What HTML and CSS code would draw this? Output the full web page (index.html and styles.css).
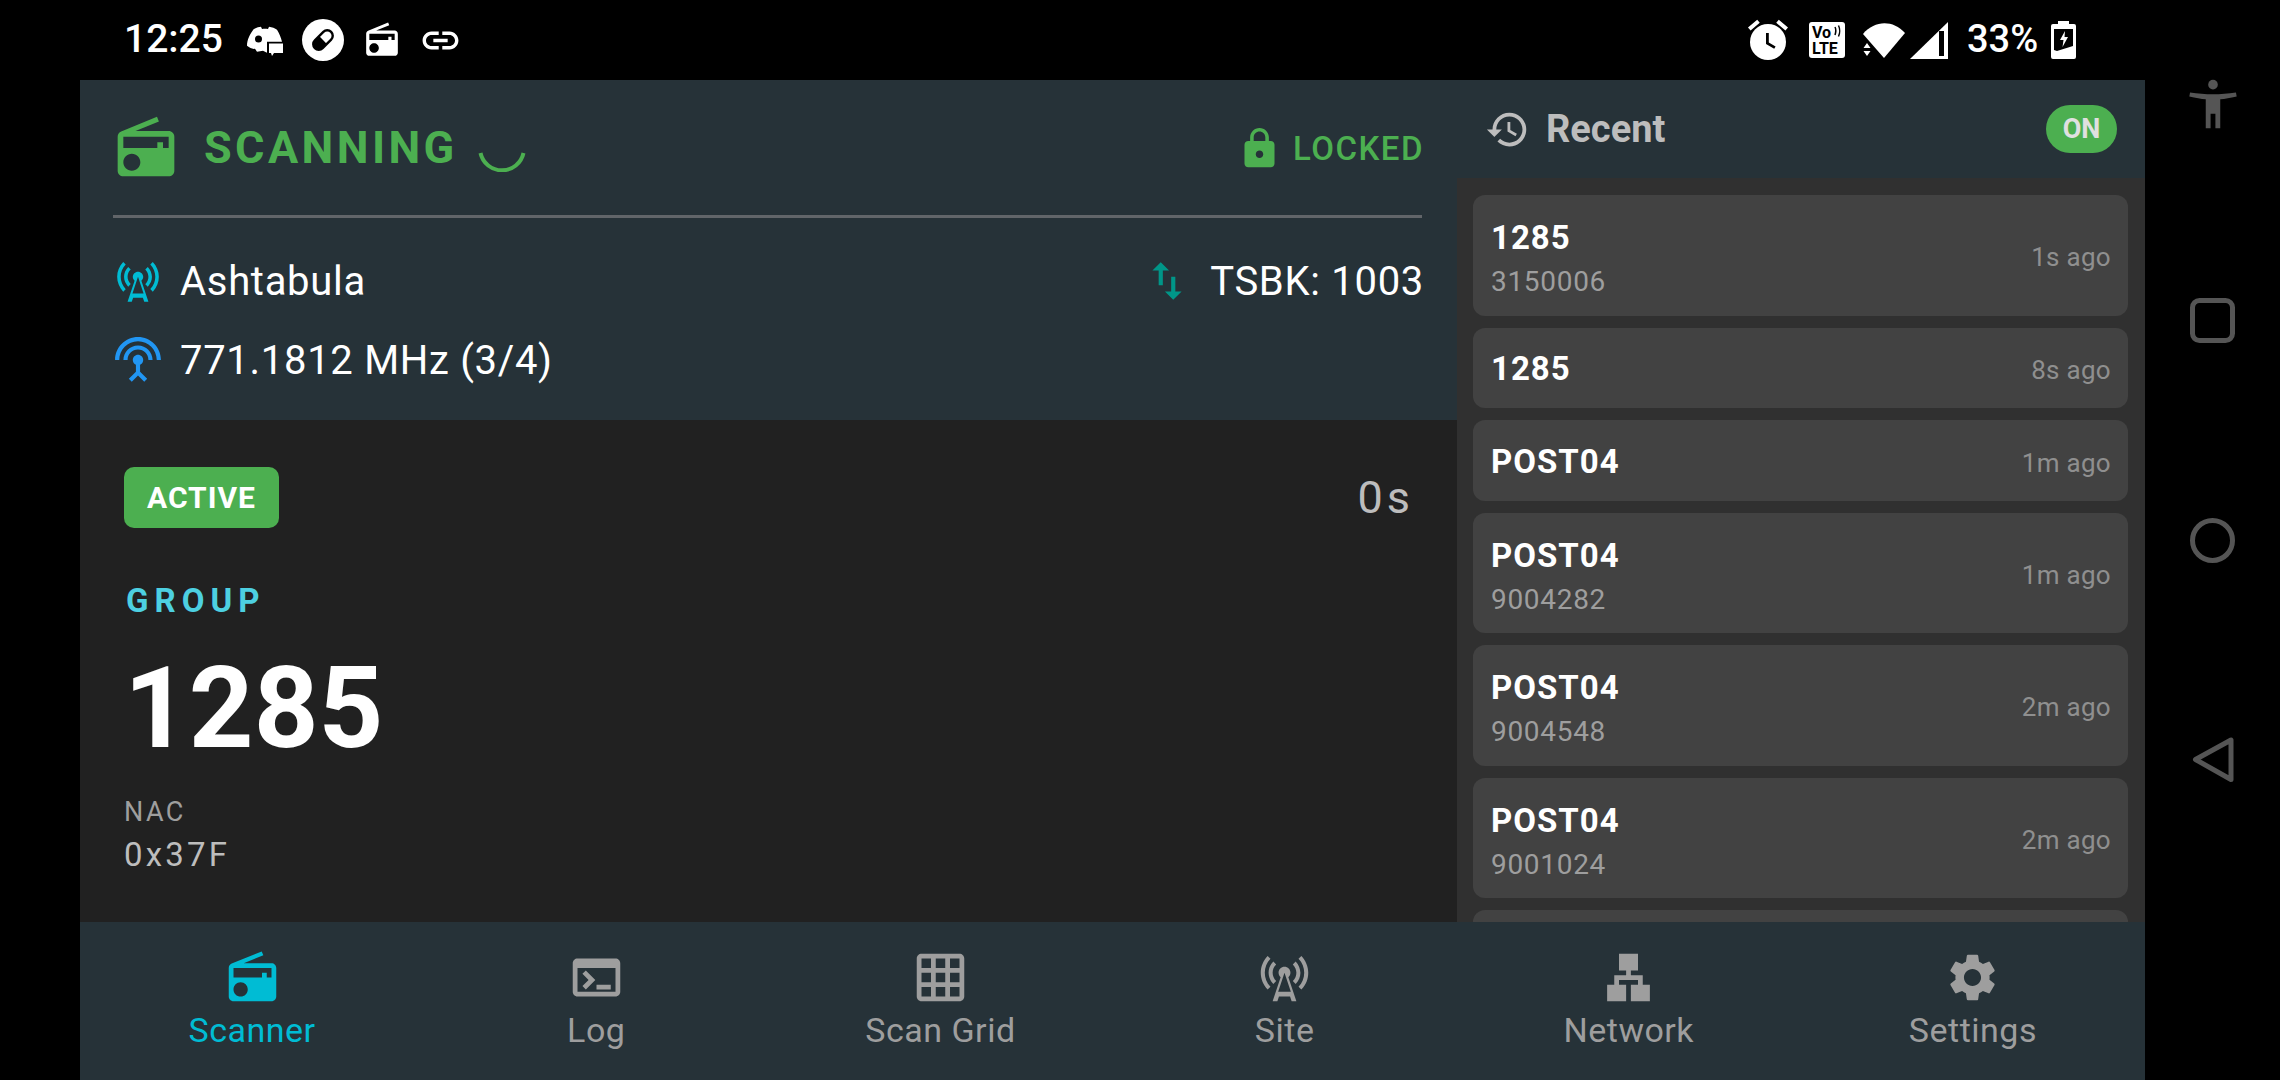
FILE: index.html
```html
<!DOCTYPE html>
<html lang="en">
<head>
    <meta charset="UTF-8">
    <title>P25 Scanner</title>
    <link rel="stylesheet" href="styles.css">
</head>
<body>

    <!-- shared icons -->
    <svg class="icon-defs" aria-hidden="true">
        <symbol id="i-radio" viewBox="0 0 24 24"><path d="M3.24 6.15C2.51 6.43 2 7.17 2 8v12c0 1.1.89 2 2 2h16c1.11 0 2-.9 2-2V8c0-1.11-.89-2-2-2H8.3l8.26-3.34L15.88 1 3.24 6.15zM7 20c-1.66 0-3-1.34-3-3s1.34-3 3-3 3 1.34 3 3-1.34 3-3 3zm13-8h-2v-2h-2v2H4V8h16v4z"/></symbol>
        <symbol id="i-tower" viewBox="0 0 24 24"><path d="M7.3 14.7l1.2-1.2c-1-1-1.5-2.3-1.5-3.5 0-1.3.5-2.6 1.5-3.5L7.3 5.3c-1.3 1.3-2 3-2 4.7s.7 3.4 2 4.7zM19.1 2.9l-1.2 1.2c1.6 1.6 2.4 3.8 2.4 5.9 0 2.1-.8 4.3-2.4 5.9l1.2 1.2c2-2 2.9-4.5 2.9-7.1 0-2.6-1-5.1-2.9-7.1zM6.1 4.1L4.9 2.9C3 4.9 2 7.4 2 10c0 2.6 1 5.1 2.9 7.1l1.2-1.2c-1.6-1.6-2.4-3.8-2.4-5.9 0-2.1.8-4.3 2.4-5.9zm10.6 10.6c1.3-1.3 2-3 2-4.7-.1-1.7-.7-3.4-2-4.7l-1.2 1.2c1 1 1.5 2.3 1.5 3.5 0 1.3-.5 2.6-1.5 3.5l1.2 1.2zM14.5 10c0-1.38-1.12-2.5-2.5-2.5S9.5 8.62 9.5 10c0 .76.34 1.42.87 1.88L7 22h2l.67-2h4.67l.66 2h2l-3.37-10.12c.53-.46.87-1.12.87-1.88zm-5.17 8L12 10l2.67 8H9.33z"/></symbol>
    </svg>

    <div class="screen">
        <div class="phone">

            <div class="status-bar">
                <span class="clock">12:25</span>
                <svg class="st-discord" viewBox="0 0 36 31">
                    <path d="M7 3C10 1.5 12 1 14 .8L15 3c2-.3 4-.3 6 0l1-2.200c3 .4 6 1.400 8 3 2.500 4 4 8 5 12H20v11l-4-2-6 1-2-3c-3 .5-5-1-8-3 0-6 3-12 7-17z" fill="#fff"/>
                    <circle cx="11.500" cy="13" r="3.500" fill="#000"/>
                    <path d="M20 16h16v12H27l-2 3-1-3h-4z" fill="#000"/>
                    <path d="M22 17.500h14V27h-9l-2 3-1-3h-2z" fill="#fff"/>
                </svg>
                <svg class="st-pill" viewBox="0 0 42 42">
                    <circle cx="21" cy="21" r="21" fill="#fff"/>
                    <g transform="rotate(-45 21 21)">
                        <rect x="9.500" y="15.500" width="23" height="11" rx="5.500" fill="#fff" stroke="#000" stroke-width="2.400"/>
                        <path d="M15 15.500h6v11h-6a5.500 5.500 0 0 1 0-11z" fill="#000"/>
                    </g>
                </svg>
                <svg class="st-radio"><use href="#i-radio"/></svg>
                <svg class="st-link" viewBox="0 0 24 24"><path d="M3.9 12c0-1.71 1.39-3.1 3.1-3.1h4V7H7c-2.76 0-5 2.240-5 5s2.240 5 5 5h4v-1.900H7c-1.710 0-3.100-1.390-3.100-3.100zM8 13h8v-2H8v2zm9-6h-4v1.900h4c1.710 0 3.100 1.390 3.100 3.100s-1.390 3.100-3.100 3.100h-4V17h4c2.760 0 5-2.240 5-5s-2.240-5-5-5z"/></svg>

                <div class="status-right">
                    <svg class="st-alarm" viewBox="0 0 24 24">
                        <path d="M22 5.720l-4.600-3.860-1.290 1.530 4.600 3.860L22 5.720zM7.880 3.390L6.600 1.860 2 5.710l1.290 1.530 4.590-3.850z" fill="#fff"/>
                        <circle cx="12" cy="13" r="9" fill="#fff"/>
                        <path d="M11 8.500h1.400v4.700l3.400 2-.7 1.200L11 14z" fill="#000"/>
                    </svg>
                    <svg class="st-volte" viewBox="0 0 36 36">
                        <rect width="36" height="36" rx="3" fill="#fff"/>
                        <text class="volte-text" x="3" y="16">Vo</text>
                        <text class="volte-text" x="3" y="32">LTE</text>
                        <path d="M26 5c1 2 1 5 0 8M29.500 3.500c1.500 3 1.500 8 0 11" fill="none" stroke="#000" stroke-width="1.500"/>
                    </svg>
                    <svg class="st-wifi" viewBox="0 0 42 35">
                        <path d="M0 11C12 -3 30 -3 42 10L21 35z" fill="#fff"/>
                        <path d="M0 21l10 12 v4H0z" fill="#000"/>
                        <path d="M4 20l3.500 5H.5zM.5 28h7L4 33z" fill="#fff"/>
                    </svg>
                    <svg class="st-signal" viewBox="0 0 38 37">
                        <path d="M0 37L38 0v37z" fill="#fff"/>
                        <path d="M29 9h5v25h-5z" fill="#000"/>
                    </svg>
                    <span class="battery-pct">33%</span>
                    <svg class="st-battery" viewBox="0 0 25 38">
                        <path d="M7 0h11v3h5a2 2 0 0 1 2 2v31a2 2 0 0 1-2 2H2a2 2 0 0 1-2-2V5a2 2 0 0 1 2-2h5z" fill="#fff"/>
                        <path d="M3 8h19v17l-16 5-3-1z" fill="#000"/>
                        <path d="M14 10l-5 9h3.500l-1 7 5.500-10h-3.500z" fill="#fff"/>
                    </svg>
                </div>
            </div>

            <div class="app">
                <div class="panes">
                    <div class="left-pane">

                        <div class="system-panel">
                            <div class="scan-row">
                                <svg class="scan-icon"><use href="#i-radio"/></svg>
                                <span class="scan-text">SCANNING</span>
                                <svg class="spinner" viewBox="0 0 48 48"><path d="M2.500 29A22 22 0 0 0 45.500 29"/></svg>
                                <div class="lock-state">
                                    <svg class="lock-icon" viewBox="0 0 24 24"><path d="M18 8h-1V6c0-2.760-2.240-5-5-5S7 3.240 7 6v2H6c-1.100 0-2 .9-2 2v10c0 1.100.9 2 2 2h12c1.100 0 2-.9 2-2V10c0-1.100-.9-2-2-2zm-6 9c-1.100 0-2-.9-2-2s.9-2 2-2 2 .9 2 2-.9 2-2 2zm3.100-9H8.900V6c0-1.710 1.390-3.100 3.100-3.100 1.710 0 3.100 1.390 3.100 3.100v2z"/></svg>
                                    <span>LOCKED</span>
                                </div>
                            </div>
                            <div class="panel-divider"></div>
                            <div class="info-row">
                                <svg class="info-icon site-color"><use href="#i-tower"/></svg>
                                <span class="info-text">Ashtabula</span>
                                <div class="tsbk">
                                    <svg class="info-icon tsbk-color" viewBox="0 0 24 24"><path d="M16 17.010V10h-2v7.010h-3L15 21l4-3.990h-3zM9 3L5 6.990h3V14h2V6.990h3L9 3z"/></svg>
                                    <span class="info-text">TSBK: 1003</span>
                                </div>
                            </div>
                            <div class="info-row">
                                <svg class="info-icon freq-color" viewBox="0 0 24 24"><path d="M12 5c-3.870 0-7 3.130-7 7h2c0-2.760 2.240-5 5-5s5 2.240 5 5h2c0-3.870-3.130-7-7-7zm1 9.290c.88-.39 1.500-1.260 1.500-2.290 0-1.380-1.120-2.500-2.500-2.500S9.500 10.620 9.500 12c0 1.020.62 1.900 1.500 2.290v3.300L7.590 21 9 22.410l3-3 3 3L16.410 21 13 17.590v-3.300zM12 1C5.930 1 1 5.930 1 12h2c0-4.970 4.030-9 9-9s9 4.030 9 9h2c0-6.070-4.930-11-11-11z"/></svg>
                                <span class="info-text">771.1812 MHz (3/4)</span>
                            </div>
                        </div>

                        <div class="call-panel">
                            <div class="call-top">
                                <span class="badge">ACTIVE</span>
                                <span class="duration">0s</span>
                            </div>
                            <div class="call-label">GROUP</div>
                            <div class="call-id">1285</div>
                            <div class="nac-label">NAC</div>
                            <div class="nac-value">0x37F</div>
                        </div>
                    </div>

                    <div class="right-pane">
                        <div class="recent-head">
                            <svg class="history-icon" viewBox="0 0 24 24"><path d="M13 3c-4.970 0-9 4.030-9 9H1l3.890 3.890.07.14L9 12H6c0-3.870 3.130-7 7-7s7 3.130 7 7-3.130 7-7 7c-1.930 0-3.680-.79-4.940-2.060l-1.420 1.420C8.270 19.990 10.510 21 13 21c4.970 0 9-4.030 9-9s-4.030-9-9-9zm-1 5v5l4.280 2.540.72-1.210-3.500-2.080V8H12z"/></svg>
                            <span class="recent-title">Recent</span>
                            <span class="on-pill">ON</span>
                        </div>
                        <div class="recent-list">
                            <div class="recent-card tall">
                                <div><div class="card-title">1285</div><div class="card-sub">3150006</div></div>
                                <span class="card-time">1s ago</span>
                            </div>
                            <div class="recent-card">
                                <div class="card-title">1285</div>
                                <span class="card-time">8s ago</span>
                            </div>
                            <div class="recent-card">
                                <div class="card-title">POST04</div>
                                <span class="card-time">1m ago</span>
                            </div>
                            <div class="recent-card tall">
                                <div><div class="card-title">POST04</div><div class="card-sub">9004282</div></div>
                                <span class="card-time">1m ago</span>
                            </div>
                            <div class="recent-card tall">
                                <div><div class="card-title">POST04</div><div class="card-sub">9004548</div></div>
                                <span class="card-time">2m ago</span>
                            </div>
                            <div class="recent-card tall">
                                <div><div class="card-title">POST04</div><div class="card-sub">9001024</div></div>
                                <span class="card-time">2m ago</span>
                            </div>
                            <div class="recent-card tall"></div>
                        </div>
                    </div>
                </div>

                <div class="bottom-nav">
                    <div class="nav-item active">
                        <svg class="nav-icon"><use href="#i-radio"/></svg>
                        <span>Scanner</span>
                    </div>
                    <div class="nav-item">
                        <svg class="nav-icon" viewBox="0 0 24 24"><path d="M20 4H4c-1.100 0-2 .9-2 2v12c0 1.100.9 2 2 2h16c1.100 0 2-.9 2-2V6c0-1.100-.9-2-2-2zm0 14H4V8h16v10zm-2-1h-6v-2h6v2zM7.500 17l-1.410-1.410L8.670 13l-2.590-2.590L7.500 9l4 4-4 4z"/></svg>
                        <span>Log</span>
                    </div>
                    <div class="nav-item">
                        <svg class="nav-icon" viewBox="0 0 24 24"><path d="M20 2H4c-1.100 0-2 .9-2 2v16c0 1.100.9 2 2 2h16c1.100 0 2-.9 2-2V4c0-1.100-.9-2-2-2zM8 20H4v-4h4v4zm0-6H4v-4h4v4zm0-6H4V4h4v4zm6 12h-4v-4h4v4zm0-6h-4v-4h4v4zm0-6h-4V4h4v4zm6 12h-4v-4h4v4zm0-6h-4v-4h4v4zm0-6h-4V4h4v4z"/></svg>
                        <span>Scan Grid</span>
                    </div>
                    <div class="nav-item">
                        <svg class="nav-icon"><use href="#i-tower"/></svg>
                        <span>Site</span>
                    </div>
                    <div class="nav-item">
                        <svg class="nav-icon" viewBox="0 0 24 24"><path d="M13 22h8v-7h-3v-4h-5V9h3V2H8v7h3v2H6v4H3v7h8v-7H8v-2h8v2h-3z"/></svg>
                        <span>Network</span>
                    </div>
                    <div class="nav-item">
                        <svg class="nav-icon" viewBox="0 0 24 24"><path d="M19.140 12.940c.04-.3.06-.61.06-.94 0-.32-.02-.64-.07-.94l2.030-1.580c.18-.14.23-.41.12-.61l-1.920-3.320c-.12-.22-.37-.29-.59-.22l-2.390.96c-.5-.38-1.030-.7-1.620-.94L14.400 2.810c-.04-.24-.24-.41-.48-.41h-3.840c-.24 0-.43.17-.47.41L9.250 5.350c-.59.24-1.130.57-1.620.94l-2.390-.96c-.22-.08-.47 0-.59.22L2.740 8.870c-.12.21-.08.47.12.61l2.030 1.580c-.05.3-.09.63-.09.94s.02.64.07.94l-2.030 1.580c-.18.14-.23.41-.12.61l1.920 3.320c.12.22.37.29.59.22l2.390-.96c.5.38 1.030.7 1.620.94l.36 2.540c.05.24.24.41.48.41h3.840c.24 0 .44-.17.47-.41l.36-2.540c.59-.24 1.130-.56 1.620-.94l2.390.96c.22.08.47 0 .59-.22l1.920-3.320c.12-.22.07-.47-.12-.61l-2.010-1.580zM12 15.600c-1.980 0-3.600-1.620-3.600-3.600s1.620-3.600 3.600-3.600 3.600 1.620 3.600 3.600-1.620 3.600-3.600 3.600z"/></svg>
                        <span>Settings</span>
                    </div>
                </div>
            </div>
        </div>

        <!-- android nav buttons -->
        <div class="system-rail">
            <svg class="rail-a11y" viewBox="0 0 24 24">
                <circle cx="12" cy="4" r="2"/>
                <path d="M2.500 7.200c6.500 1 12.500 1 19 0l.3 1.700c-2.800.7-4.800 1-6.800 1.100V22h-2v-6h-2v6H9V10c-2-.1-4-.4-6.800-1.100z"/>
            </svg>
            <svg class="rail-btn" viewBox="0 0 45 45"><rect x="2.500" y="2.500" width="40" height="40" rx="7"/></svg>
            <svg class="rail-btn" viewBox="0 0 45 45"><circle cx="22.500" cy="22.500" r="20"/></svg>
            <svg class="rail-btn" viewBox="0 0 45 45"><path d="M41 3v39.500L5.500 22.500z"/></svg>
        </div>
    </div>

</body>
</html>
```

FILE: styles.css
```css
* {
    box-sizing: border-box;
}

body {
    margin: 0;
    background: #000;
    font-family: Roboto, "Noto Sans", sans-serif;
    color: #fff;
    overflow: hidden;
}

svg {
    display: block;
    flex: none;
}

.icon-defs {
    display: none;
}

.screen {
    display: flex;
    width: 2280px;
    height: 1080px;
}

.phone {
    width: 2145px;
    display: flex;
    flex-direction: column;
}

/* status bar */
.status-bar {
    height: 80px;
    display: flex;
    align-items: center;
    padding-left: 124px;
}

.clock {
    font-size: 39px;
    font-weight: 500;
    width: 109px;
    margin-top: -2px;
}

.st-discord { width: 36px; height: 31px; margin: 2px 0 0 14px; }
.st-pill { width: 42px; height: 42px; margin: 0 0 0 19px; }
.st-radio { width: 38px; height: 38px; fill: #fff; margin: 0 0 0 19px; }
.st-link { width: 43px; height: 43px; fill: #fff; margin: 0 0 0 18px; }

.status-right {
    margin-left: auto;
    margin-right: 69px;
    display: flex;
    align-items: center;
}

.st-alarm { width: 48px; height: 48px; }
.st-volte { width: 36px; height: 36px; margin-left: 17px; }
.volte-text { font-size: 16px; font-weight: 700; fill: #000; font-family: Roboto, sans-serif; }
.st-wifi { width: 42px; height: 35px; margin-left: 18px; }
.st-signal { width: 38px; height: 37px; margin-left: 5px; }
.battery-pct { font-size: 38px; font-weight: 500; margin-left: 19px; width: 84px; margin-top: -2px; }
.st-battery { width: 25px; height: 38px; }

/* main app */
.app {
    margin-left: 80px;
    flex: 1;
    display: flex;
    flex-direction: column;
    min-height: 0;
    background: #263238;
}

.panes {
    flex: 1;
    display: flex;
    min-height: 0;
}

.left-pane {
    width: 1377px;
    display: flex;
    flex-direction: column;
}

.system-panel {
    height: 340px;
    background: #263238;
    padding: 34px 35px 0 33px;
}

.scan-row {
    display: flex;
    align-items: center;
    height: 68px;
}

.scan-icon {
    width: 68px;
    height: 68px;
    fill: #4caf50;
    margin-left: -1px;
}

.scan-text {
    font-size: 45px;
    font-weight: 700;
    letter-spacing: 3.4px;
    color: #4caf50;
    margin-left: 24px;
    margin-top: -2px;
}

.spinner {
    width: 48px;
    height: 48px;
    margin-left: 20px;
    fill: none;
    stroke: #4caf50;
    stroke-width: 4;
}

.lock-state {
    margin-left: auto;
    margin-right: -2px;
    display: flex;
    align-items: center;
    gap: 11px;
    font-size: 33px;
    font-weight: 500;
    letter-spacing: 1.5px;
    color: #4caf50;
}

.lock-icon {
    width: 45px;
    height: 45px;
    fill: #4caf50;
}

.panel-divider {
    height: 3px;
    background: #616569;
    margin-top: 33px;
    margin-bottom: 38px;
}

.info-row {
    display: flex;
    align-items: center;
    height: 50px;
    margin-bottom: 29px;
}

.info-icon {
    width: 50px;
    height: 50px;
}

.site-color { fill: #00bcd4; }
.tsbk-color { fill: #009688; }
.freq-color { fill: #2196f3; }

.info-text {
    font-size: 40px;
    margin-left: 17px;
    letter-spacing: .7px;
}

.tsbk {
    margin-left: auto;
    margin-right: -2px;
    display: flex;
    align-items: center;
    gap: 1px;
}

/* current call */
.call-panel {
    flex: 1;
    background: #212121;
    padding: 47px 48px 0 44px;
}

.call-top {
    display: flex;
    justify-content: space-between;
    align-items: center;
}

.badge {
    width: 155px;
    height: 61px;
    border-radius: 10px;
    background: #4caf50;
    font-size: 30px;
    font-weight: 700;
    letter-spacing: 1px;
    display: flex;
    align-items: center;
    justify-content: center;
}

.duration {
    font-size: 45px;
    letter-spacing: 4px;
    color: #bdbdbd;
    margin-right: -5px;
}

.call-label {
    font-size: 33px;
    font-weight: 700;
    line-height: 40px;
    letter-spacing: 6px;
    color: #4dd0e1;
    margin-top: 53px;
    padding-left: 2px;
}

.call-id {
    font-size: 113px;
    font-weight: 700;
    line-height: 130px;
    margin-top: 23px;
}

.nac-label {
    font-size: 27px;
    line-height: 32px;
    letter-spacing: 2.400px;
    color: #9e9e9e;
    margin-top: 22px;
}

.nac-value {
    font-size: 33px;
    line-height: 40px;
    letter-spacing: 3.2px;
    color: #bdbdbd;
    margin-top: 7px;
}

/* recent list */
.right-pane {
    flex: 1;
    display: flex;
    flex-direction: column;
    min-height: 0;
}

.recent-head {
    height: 98px;
    display: flex;
    align-items: center;
    padding: 0 28px;
}

.history-icon {
    width: 45px;
    height: 45px;
    fill: #bdbdbd;
}

.recent-title {
    font-size: 38px;
    font-weight: 700;
    color: #bdbdbd;
    margin-left: 16px;
}

.on-pill {
    margin-left: auto;
    width: 71px;
    height: 48px;
    border-radius: 24px;
    background: #4caf50;
    color: #e0e0e0;
    font-size: 27px;
    font-weight: 700;
    display: flex;
    align-items: center;
    justify-content: center;
}

.recent-list {
    flex: 1;
    background: #303030;
    padding: 17px 17px 0 16px;
    display: flex;
    flex-direction: column;
    gap: 12px;
    overflow: hidden;
}

.recent-card {
    flex: none;
    height: 80.5px;
    background: #424242;
    border-radius: 12px;
    padding: 3px 17px 0 18px;
    display: flex;
    align-items: center;
    justify-content: space-between;
}

.recent-card.tall {
    height: 120.5px;
    padding-top: 2px;
}

.recent-card.tall > div {
    padding-top: 5px;
}

.card-title {
    font-size: 33px;
    font-weight: 700;
    line-height: 40px;
    letter-spacing: 1px;
}

.card-sub {
    font-size: 28px;
    line-height: 34px;
    letter-spacing: .7px;
    color: #9e9e9e;
    margin-top: 7px;
}

.card-time {
    font-size: 26px;
    letter-spacing: .3px;
    color: #8f8f8f;
    padding-top: 2px;
}

/* bottom nav */
.bottom-nav {
    height: 158px;
    display: flex;
    background: #263238;
}

.nav-item {
    flex: 1;
    display: flex;
    flex-direction: column;
    align-items: center;
    padding-top: 27px;
    font-size: 34px;
    line-height: 40px;
    letter-spacing: .5px;
    color: #9e9e9e;
}

.nav-item.active {
    color: #00bcd4;
}

.nav-icon {
    width: 57px;
    height: 57px;
    margin-bottom: 4px;
    fill: currentColor;
}

/* system nav rail */
.system-rail {
    flex: 1;
    display: flex;
    flex-direction: column;
    align-items: center;
    gap: 174.5px;
    padding-top: 75px;
}

.rail-a11y {
    width: 58px;
    height: 58px;
    margin-bottom: -9.5px;
    fill: #555;
}

.rail-btn {
    width: 45px;
    height: 45px;
    fill: none;
    stroke: #555;
    stroke-width: 5;
    stroke-linejoin: round;
    overflow: visible;
}
```
